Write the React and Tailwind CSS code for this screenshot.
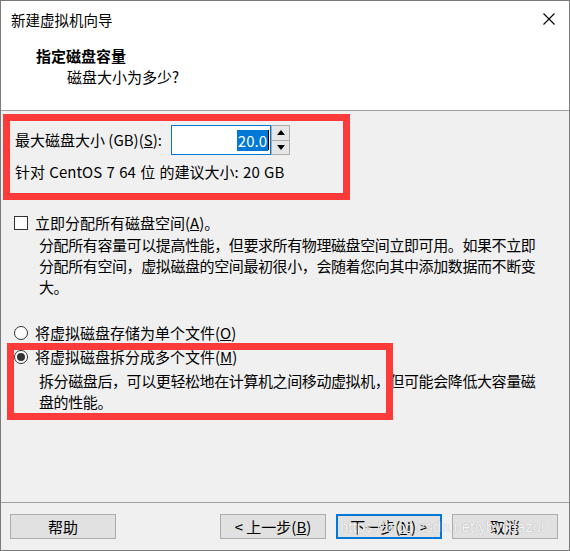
import React from "react";

const font = "font-['Noto_Sans_CJK_SC','Noto_Sans',sans-serif]";

function Btn({ children, primary }) {
  return (
    <div
      className={
        "h-[25px] w-[106px] flex items-center justify-center bg-[#e1e1e1] leading-none " +
        (primary ? "border-2 border-[#0078d7]" : "border border-[#adadad]")
      }
    >
      {children}
    </div>
  );
}

function Radio({ checked }) {
  return (
    <span className="shrink-0 w-[14px] h-[14px] rounded-full border border-[#333] bg-white flex items-center justify-center">
      {checked && <span className="w-[8px] h-[8px] rounded-full bg-[#333]"></span>}
    </span>
  );
}

export default function App() {
  return (
    <div
      className={
        "relative w-[570px] h-[551px] border border-[#7a7a7a] bg-[#f0f0f0] text-black text-[15px] " +
        font
      }
    >
      {/* header */}
      <div className="h-[110px] bg-white border-b border-[#a0a0a0]">
        <div className="h-[38px] flex items-center justify-between pl-[10px] pr-[14px]">
          <span className="text-[14.5px]">新建虚拟机向导</span>
          <svg width="12" height="12" viewBox="0 0 12 12" className="-mt-[2px]">
            <path d="M0.5 0.5 L11.5 11.5 M11.5 0.5 L0.5 11.5" stroke="#000" strokeWidth="1.1" fill="none" />
          </svg>
        </div>
        <div className="pl-[35px] pt-[7px]">
          <div className="font-bold leading-[20px]">指定磁盘容量</div>
          <div className="pl-[31px] leading-[22px]">磁盘大小为多少?</div>
        </div>
      </div>

      {/* body */}
      <div className="h-[391px] flex flex-col">
        <div className="mt-[14px] h-[30px] flex items-center pl-[14px]">
          <span className="w-[156px]">
            最大磁盘大小 (GB)(<u>S</u>):
          </span>
          <div className="w-[100px] h-[30px] border border-[#0078d7] bg-white flex items-center justify-end pr-[1px]">
            <span className="bg-[#0078d7] text-white leading-[21px] px-[1px]">20.0</span>
            <span className="w-[1px] h-[20px] bg-black"></span>
          </div>
          <div className="w-[19px] h-[30px] border border-[#adadad] bg-[#f0f0f0] flex flex-col">
            <div className="flex-1 flex items-center justify-center border-b border-[#adadad] bg-[#e6e6e6]">
              <svg width="8" height="5" viewBox="0 0 8 5"><path d="M0 5 L4 0 L8 5 Z" fill="#000" /></svg>
            </div>
            <div className="flex-1 flex items-center justify-center bg-[#e6e6e6]">
              <svg width="8" height="5" viewBox="0 0 8 5"><path d="M0 0 L4 5 L8 0 Z" fill="#000" /></svg>
            </div>
          </div>
        </div>
        <div className="mt-[7px] leading-[20px] pl-[14px] [word-spacing:1px]">
          针对 CentOS 7 64 位 的建议大小: 20 GB
        </div>

        <div className="mt-[31px] h-[20px] flex items-center pl-[13px]">
          <span className="shrink-0 w-[14px] h-[14px] border border-[#333] bg-white"></span>
          <span className="ml-[7px]">
            立即分配所有磁盘空间(<u>A</u>)。
          </span>
        </div>
        <div className="pl-[38px] mt-[1px] leading-[21px] whitespace-nowrap tracking-[-0.4px]">
          <div>分配所有容量可以提高性能，但要求所有物理磁盘空间立即可用。如果不立即</div>
          <div>分配所有空间，虚拟磁盘的空间最初很小，会随着您向其中添加数据而不断变</div>
          <div>大。</div>
        </div>

        <div className="mt-[26px] h-[20px] flex items-center pl-[13px]">
          <Radio />
          <span className="ml-[7px]">
            将虚拟磁盘存储为单个文件(<u>O</u>)
          </span>
        </div>
        <div className="mt-[4px] h-[20px] flex items-center pl-[13px]">
          <Radio checked />
          <span className="ml-[7px]">
            将虚拟磁盘拆分成多个文件(<u>M</u>)
          </span>
        </div>
        <div className="pl-[38px] mt-[3px] leading-[21px] whitespace-nowrap tracking-[-0.4px]">
          <div>拆分磁盘后，可以更轻松地在计算机之间移动虚拟机，但可能会降低大容量磁</div>
          <div>盘的性能。</div>
        </div>
      </div>

      {/* footer */}
      <div className="h-[48px] border-t border-[#a0a0a0] pt-[11px] pl-[9px] flex">
        <Btn>帮助</Btn>
        <div className="ml-[104px] flex gap-[10px]">
          <Btn>&lt; 上一步(<u>B</u>)</Btn>
          <Btn primary>下一步(<u>N</u>) &gt;</Btn>
          <Btn>取消</Btn>
        </div>
      </div>

      {/* annotation boxes */}
      <div className="absolute left-[2px] top-[113px] w-[347px] h-[86px] border-[7px] border-[#ff3a3a]"></div>
      <div className="absolute left-[6px] top-[342px] w-[386px] h-[77px] border-[7px] border-[#ff3a3a]"></div>

      {/* watermark */}
      <div className="absolute left-[339px] top-[516px] font-['Liberation_Sans',sans-serif] text-[15px] leading-[20px] text-white/90 [text-shadow:0_0_1px_rgba(0,0,0,0.35)]">
        https://blog.csdn.net/ybyiidazui
      </div>
    </div>
  );
}
